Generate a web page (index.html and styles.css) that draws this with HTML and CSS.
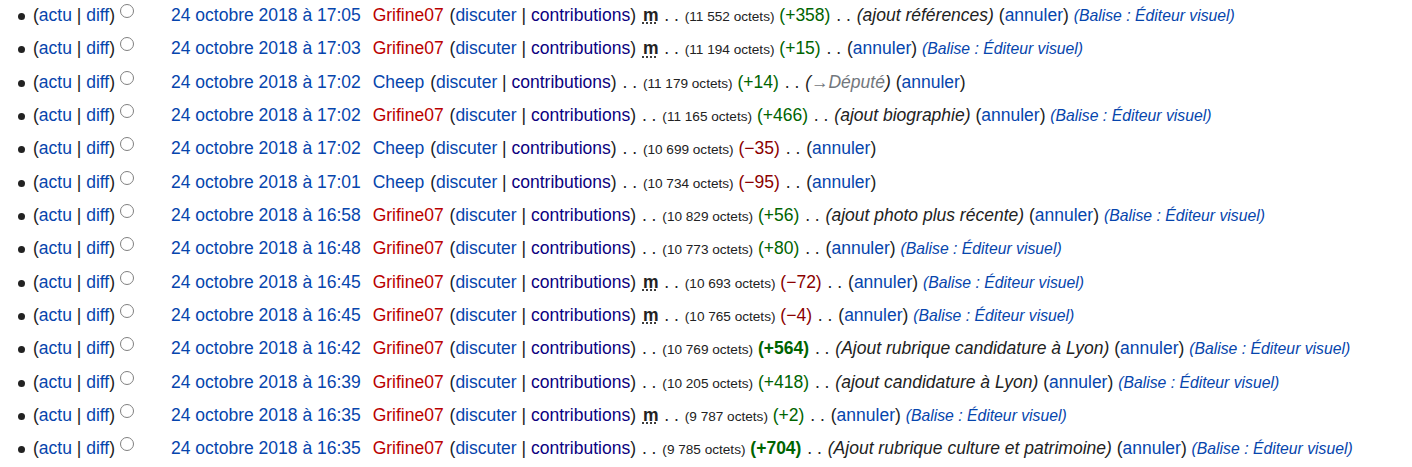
FILE: index.html
```html
<!DOCTYPE html>
<html lang="fr">
<head>
<meta charset="utf-8">
<title>Historique</title>
<link rel="stylesheet" href="styles.css">
</head>
<body>
<ul class="history">
<li><span class="hl">(<a href="#">actu</a> | <a href="#">diff</a>)</span><span class="radio"></span><a class="date" href="#">24 octobre 2018 à 17:05</a> <span class="user"><a class="new" href="#">Grifine07</a> <span class="tools">(<a href="#">discuter</a> | <a class="visited" href="#">contributions</a>)</span></span> <abbr class="minor">m</abbr> <span class="sep">. .</span> <span class="bytes">(11 552 octets)</span> <span class="pos">(+358)</span> <span class="sep">. .</span> <span class="comment">(ajout références)</span> <span class="undo">(<a href="#">annuler</a>)</span> <span class="tags">(<a href="#">Balise</a> : <a href="#">Éditeur visuel</a>)</span></li>
<li><span class="hl">(<a href="#">actu</a> | <a href="#">diff</a>)</span><span class="radio"></span><a class="date" href="#">24 octobre 2018 à 17:03</a> <span class="user"><a class="new" href="#">Grifine07</a> <span class="tools">(<a href="#">discuter</a> | <a class="visited" href="#">contributions</a>)</span></span> <abbr class="minor">m</abbr> <span class="sep">. .</span> <span class="bytes">(11 194 octets)</span> <span class="pos">(+15)</span> <span class="sep">. .</span> <span class="undo">(<a href="#">annuler</a>)</span> <span class="tags">(<a href="#">Balise</a> : <a href="#">Éditeur visuel</a>)</span></li>
<li><span class="hl">(<a href="#">actu</a> | <a href="#">diff</a>)</span><span class="radio"></span><a class="date" href="#">24 octobre 2018 à 17:02</a> <span class="user"><a href="#">Cheep</a> <span class="tools">(<a href="#">discuter</a> | <a class="visited" href="#">contributions</a>)</span></span> <span class="sep">. .</span> <span class="bytes">(11 179 octets)</span> <span class="pos">(+14)</span> <span class="sep">. .</span> <span class="comment">(<span class="auto"><a href="#">→</a>Député</span>)</span> <span class="undo">(<a href="#">annuler</a>)</span></li>
<li><span class="hl">(<a href="#">actu</a> | <a href="#">diff</a>)</span><span class="radio"></span><a class="date" href="#">24 octobre 2018 à 17:02</a> <span class="user"><a class="new" href="#">Grifine07</a> <span class="tools">(<a href="#">discuter</a> | <a class="visited" href="#">contributions</a>)</span></span> <span class="sep">. .</span> <span class="bytes">(11 165 octets)</span> <span class="pos">(+466)</span> <span class="sep">. .</span> <span class="comment">(ajout biographie)</span> <span class="undo">(<a href="#">annuler</a>)</span> <span class="tags">(<a href="#">Balise</a> : <a href="#">Éditeur visuel</a>)</span></li>
<li><span class="hl">(<a href="#">actu</a> | <a href="#">diff</a>)</span><span class="radio"></span><a class="date" href="#">24 octobre 2018 à 17:02</a> <span class="user"><a href="#">Cheep</a> <span class="tools">(<a href="#">discuter</a> | <a class="visited" href="#">contributions</a>)</span></span> <span class="sep">. .</span> <span class="bytes">(10 699 octets)</span> <span class="neg">(−35)</span> <span class="sep">. .</span> <span class="undo">(<a href="#">annuler</a>)</span></li>
<li><span class="hl">(<a href="#">actu</a> | <a href="#">diff</a>)</span><span class="radio"></span><a class="date" href="#">24 octobre 2018 à 17:01</a> <span class="user"><a href="#">Cheep</a> <span class="tools">(<a href="#">discuter</a> | <a class="visited" href="#">contributions</a>)</span></span> <span class="sep">. .</span> <span class="bytes">(10 734 octets)</span> <span class="neg">(−95)</span> <span class="sep">. .</span> <span class="undo">(<a href="#">annuler</a>)</span></li>
<li><span class="hl">(<a href="#">actu</a> | <a href="#">diff</a>)</span><span class="radio"></span><a class="date" href="#">24 octobre 2018 à 16:58</a> <span class="user"><a class="new" href="#">Grifine07</a> <span class="tools">(<a href="#">discuter</a> | <a class="visited" href="#">contributions</a>)</span></span> <span class="sep">. .</span> <span class="bytes">(10 829 octets)</span> <span class="pos">(+56)</span> <span class="sep">. .</span> <span class="comment">(ajout photo plus récente)</span> <span class="undo">(<a href="#">annuler</a>)</span> <span class="tags">(<a href="#">Balise</a> : <a href="#">Éditeur visuel</a>)</span></li>
<li><span class="hl">(<a href="#">actu</a> | <a href="#">diff</a>)</span><span class="radio"></span><a class="date" href="#">24 octobre 2018 à 16:48</a> <span class="user"><a class="new" href="#">Grifine07</a> <span class="tools">(<a href="#">discuter</a> | <a class="visited" href="#">contributions</a>)</span></span> <span class="sep">. .</span> <span class="bytes">(10 773 octets)</span> <span class="pos">(+80)</span> <span class="sep">. .</span> <span class="undo">(<a href="#">annuler</a>)</span> <span class="tags">(<a href="#">Balise</a> : <a href="#">Éditeur visuel</a>)</span></li>
<li><span class="hl">(<a href="#">actu</a> | <a href="#">diff</a>)</span><span class="radio"></span><a class="date" href="#">24 octobre 2018 à 16:45</a> <span class="user"><a class="new" href="#">Grifine07</a> <span class="tools">(<a href="#">discuter</a> | <a class="visited" href="#">contributions</a>)</span></span> <abbr class="minor">m</abbr> <span class="sep">. .</span> <span class="bytes">(10 693 octets)</span> <span class="neg">(−72)</span> <span class="sep">. .</span> <span class="undo">(<a href="#">annuler</a>)</span> <span class="tags">(<a href="#">Balise</a> : <a href="#">Éditeur visuel</a>)</span></li>
<li><span class="hl">(<a href="#">actu</a> | <a href="#">diff</a>)</span><span class="radio"></span><a class="date" href="#">24 octobre 2018 à 16:45</a> <span class="user"><a class="new" href="#">Grifine07</a> <span class="tools">(<a href="#">discuter</a> | <a class="visited" href="#">contributions</a>)</span></span> <abbr class="minor">m</abbr> <span class="sep">. .</span> <span class="bytes">(10 765 octets)</span> <span class="neg">(−4)</span> <span class="sep">. .</span> <span class="undo">(<a href="#">annuler</a>)</span> <span class="tags">(<a href="#">Balise</a> : <a href="#">Éditeur visuel</a>)</span></li>
<li><span class="hl">(<a href="#">actu</a> | <a href="#">diff</a>)</span><span class="radio"></span><a class="date" href="#">24 octobre 2018 à 16:42</a> <span class="user"><a class="new" href="#">Grifine07</a> <span class="tools">(<a href="#">discuter</a> | <a class="visited" href="#">contributions</a>)</span></span> <span class="sep">. .</span> <span class="bytes">(10 769 octets)</span> <strong class="pos">(+564)</strong> <span class="sep">. .</span> <span class="comment">(Ajout rubrique candidature à Lyon)</span> <span class="undo">(<a href="#">annuler</a>)</span> <span class="tags">(<a href="#">Balise</a> : <a href="#">Éditeur visuel</a>)</span></li>
<li><span class="hl">(<a href="#">actu</a> | <a href="#">diff</a>)</span><span class="radio"></span><a class="date" href="#">24 octobre 2018 à 16:39</a> <span class="user"><a class="new" href="#">Grifine07</a> <span class="tools">(<a href="#">discuter</a> | <a class="visited" href="#">contributions</a>)</span></span> <span class="sep">. .</span> <span class="bytes">(10 205 octets)</span> <span class="pos">(+418)</span> <span class="sep">. .</span> <span class="comment">(ajout candidature à Lyon)</span> <span class="undo">(<a href="#">annuler</a>)</span> <span class="tags">(<a href="#">Balise</a> : <a href="#">Éditeur visuel</a>)</span></li>
<li><span class="hl">(<a href="#">actu</a> | <a href="#">diff</a>)</span><span class="radio"></span><a class="date" href="#">24 octobre 2018 à 16:35</a> <span class="user"><a class="new" href="#">Grifine07</a> <span class="tools">(<a href="#">discuter</a> | <a class="visited" href="#">contributions</a>)</span></span> <abbr class="minor">m</abbr> <span class="sep">. .</span> <span class="bytes">(9 787 octets)</span> <span class="pos">(+2)</span> <span class="sep">. .</span> <span class="undo">(<a href="#">annuler</a>)</span> <span class="tags">(<a href="#">Balise</a> : <a href="#">Éditeur visuel</a>)</span></li>
<li><span class="hl">(<a href="#">actu</a> | <a href="#">diff</a>)</span><span class="radio"></span><a class="date" href="#">24 octobre 2018 à 16:35</a> <span class="user"><a class="new" href="#">Grifine07</a> <span class="tools">(<a href="#">discuter</a> | <a class="visited" href="#">contributions</a>)</span></span> <span class="sep">. .</span> <span class="bytes">(9 785 octets)</span> <strong class="pos">(+704)</strong> <span class="sep">. .</span> <span class="comment">(Ajout rubrique culture et patrimoine)</span> <span class="undo">(<a href="#">annuler</a>)</span> <span class="tags">(<a href="#">Balise</a> : <a href="#">Éditeur visuel</a>)</span></li>
</ul>
</body>
</html>
```

FILE: styles.css
```css
html, body {
  margin: 0;
  padding: 0;
  background: #ffffff;
}
body {
  font-family: "Liberation Sans", Arial, sans-serif;
  font-size: 17.5px;
  color: #222222;
}
a {
  color: #0645ad;
  text-decoration: none;
}
a.new {
  color: #ba0000;
}
a.visited {
  color: #0b0080;
}
.history {
  list-style: none;
  margin: -1px 0 0 0;
  padding: 0;
}
.history li {
  height: 33.33px;
  line-height: 33.33px;
  white-space: nowrap;
}
.history li::before {
  content: "";
  display: inline-block;
  width: 7px;
  height: 7px;
  border-radius: 50%;
  background: #222222;
  margin: 0 8px 0 18px;
  vertical-align: 1px;
}
.radio {
  display: inline-block;
  width: 12px;
  height: 12px;
  border: 1px solid #808080;
  border-radius: 50%;
  margin: 0 37px 0 5px;
  vertical-align: 3px;
}
.user {
  margin-left: 7px;
}
.tools {
  margin-left: 1px;
}
.minor {
  font-weight: bold;
  text-decoration: underline dotted;
  text-underline-offset: 2px;
  margin-left: 2px;
}
.sep {
  margin: 0 1px;
}
.bytes {
  font-size: 13.6px;
  line-height: 1;
}
.pos {
  color: #006400;
}
.neg {
  color: #8b0000;
}
strong.pos {
  font-weight: bold;
}
.comment {
  font-style: italic;
}
.auto,
.auto a {
  color: #72777d;
}
.tags {
  font-style: italic;
  font-size: 15.75px;
  line-height: 1;
  color: #0645ad;
}
```
